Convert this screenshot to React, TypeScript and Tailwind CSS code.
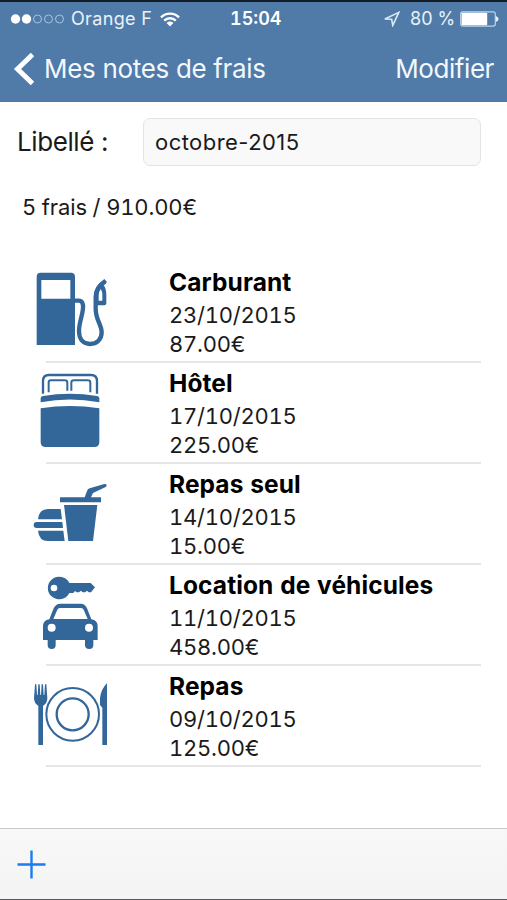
import type { ReactNode } from "react"

type Expense = {
  label: string
  date: string
  amount: string
  icon: ReactNode
}

function FuelIcon() {
  return (
    <svg viewBox="0 3 330 300" className="h-[100px] w-[110px]" fill="#336699">
      <path
        fillRule="evenodd"
        d="M50 255V50Q50 38 62 38H153Q165 38 165 50V255ZM64 60V116H151V60Z"
      />
      <path
        d="M164 122H176Q191 122 189 145C187 170 177 187 177 213C177 238 190 252 210 252C231 252 245 238 245 217C245 194 227 180 227 146V112C227 88 238 75 255 65"
        fill="none"
        stroke="#336699"
        strokeWidth="13"
      />
      <path
        fillRule="evenodd"
        d="M222 110Q224 84 237 72L253 57L261 66L251 76Q259 86 259 105V128Q259 136 251 136H228ZM236 122H247V104Q247 94 242 87Q236 94 236 106Z"
      />
    </svg>
  )
}

function BedIcon() {
  return (
    <svg viewBox="0 6 330 300" className="h-[100px] w-[110px]" fill="#336699">
      <path d="M69 101V63Q69 45 87 45H213Q231 45 231 63V101" fill="none" stroke="#336699" strokeWidth="7" />
      <path
        d="M86 97V67Q86 61 92 61H134Q142 61 142 68V92M154 92V68Q154 61 162 61H203Q211 61 211 68V97"
        fill="none"
        stroke="#336699"
        strokeWidth="6"
      />
      <path d="M62 127V114Q62 109 69 108Q150 95 231 108Q238 109 238 114V127Q150 110 62 127Z" />
      <path d="M62 145Q150 131 238 145V246Q238 261 223 261H77Q62 261 62 246Z" />
    </svg>
  )
}

function FastFoodIcon() {
  return (
    <svg viewBox="0 -6 330 300" className="h-[100px] w-[110px]" fill="#336699">
      <path d="M120 97H194L202 76Q204 72 209 70L253 57Q258 56 260 60Q260 64 257 66L219 84L213 97H243V112H120Z" />
      <path d="M132 120H232L219 228H145Z" />
      <path d="M54 163Q57 132 84 132H122L126 163Z" />
      <path d="M50 171H127L129 189H50Q41 189 41 180Q41 171 50 171Z" />
      <path d="M54 197H130L134 228H84Q57 228 54 197Z" />
    </svg>
  )
}

function CarRentalIcon() {
  return (
    <svg viewBox="0 -3 330 300" className="h-[100px] w-[110px]" fill="#336699">
      <path
        fillRule="evenodd"
        d="M148 54H212L225 67L213 82H206L201 77L195 82H188L183 77L177 82H170L165 78L160 84H148A34 34 0 1 1 148 54ZM102 59A10 10 0 1 0 102 79A10 10 0 1 0 102 59Z"
      />
      <path
        fillRule="evenodd"
        d="M88 163L101 130Q107 116 121 116H182Q196 116 201 130L214 163Q233 166 233 183V225H220V240Q220 252 208 252Q195 252 195 240V225H107V240Q107 252 95 252Q83 252 83 240V225H69V183Q69 166 88 163ZM100 162H203L191 134Q189 129 183 129H120Q114 129 112 134ZM95 176A12 12 0 1 0 95 200A12 12 0 1 0 95 176ZM207 176A12 12 0 1 0 207 200A12 12 0 1 0 207 176Z"
      />
    </svg>
  )
}

function MealIcon() {
  return (
    <svg viewBox="0 0 330 300" className="h-[100px] w-[110px]" fill="#336699">
      <path d="M45 58H49L51 90H53L55 58H59L61 90H63L65 58H69L71 90H73L75 58H79L82 100Q82 114 69 123V240H55V123Q42 114 42 100Z" />
      <circle cx="158" cy="148" r="79" fill="none" stroke="#336699" strokeWidth="6" />
      <circle cx="158" cy="148" r="48" fill="none" stroke="#336699" strokeWidth="7" />
      <path d="M261 55V240H247V128L240 120V100Q243 72 261 55Z" />
    </svg>
  )
}

const expenses: Expense[] = [
  { label: "Carburant", date: "23/10/2015", amount: "87.00€", icon: <FuelIcon /> },
  { label: "Hôtel", date: "17/10/2015", amount: "225.00€", icon: <BedIcon /> },
  { label: "Repas seul", date: "14/10/2015", amount: "15.00€", icon: <FastFoodIcon /> },
  { label: "Location de véhicules", date: "11/10/2015", amount: "458.00€", icon: <CarRentalIcon /> },
  { label: "Repas", date: "09/10/2015", amount: "125.00€", icon: <MealIcon /> },
]

function StatusBar() {
  return (
    <div className="flex h-[34px] items-center text-[18px] leading-[34px] text-[#e9f2fb]">
      <div className="flex w-[230px] items-center">
        <svg viewBox="0 0 56 12" className="ml-[10px] h-3 w-14 shrink-0">
          <circle cx="5.5" cy="6" r="4.7" fill="#fff" />
          <circle cx="16.5" cy="6" r="4.7" fill="#fff" />
          <circle cx="27.5" cy="6" r="4" fill="none" stroke="#a9c4df" />
          <circle cx="38.5" cy="6" r="4" fill="none" stroke="#a9c4df" />
          <circle cx="49.5" cy="6" r="4" fill="none" stroke="#a9c4df" />
        </svg>
        <span className="ml-[5px] w-[89px] whitespace-nowrap tracking-[0.35px]">Orange F</span>
        <svg viewBox="0 0 20 15" className="h-[15px] w-5" fill="none" stroke="#fff" strokeWidth="2.4">
          <path d="M1 5.3A12.8 12.8 0 0 1 19 5.3" />
          <path d="M4.2 8.6A8.2 8.2 0 0 1 15.8 8.6" />
          <path d="M10 14.5L6.6 11A4.8 4.8 0 0 1 13.4 11Z" fill="#fff" stroke="none" />
        </svg>
      </div>
      <span className="w-[153px] whitespace-nowrap font-semibold tabular-nums text-white">15:04</span>
      <svg viewBox="0 0 18 16" className="h-4 w-[18px]" fill="none" stroke="#dbe8f5" strokeWidth="1.6">
        <path d="M15.8 1.4L1.8 8L8.6 8.3L9.8 14.4Z" />
      </svg>
      <span className="ml-[9px] w-[50px] whitespace-nowrap">80 %</span>
      <svg viewBox="0 0 40 16" className="h-4 w-10">
        <rect x="0.7" y="0.9" width="34.6" height="14.2" rx="2" fill="none" stroke="#bdd3e8" strokeWidth="1.2" />
        <rect x="1.6" y="1.8" width="25.6" height="12.4" rx="0.8" fill="#fff" />
        <path d="M35.8 5Q38.6 6 38.6 8Q38.6 10 35.8 11Z" fill="#e9f2fb" />
      </svg>
    </div>
  )
}

function NavBar() {
  return (
    <div className="flex h-[66px] items-center text-[26px] leading-[66px] text-[#f3f8fd]">
      <svg viewBox="0 0 22 34" className="ml-[13px] h-[34px] w-[22px]" fill="none" stroke="#fff" strokeWidth="5">
        <path d="M19.5 2.5L4.5 17L19.5 31.5" />
      </svg>
      <span className="ml-[9px] flex-1 whitespace-nowrap tracking-[-0.32px]">Mes notes de frais</span>
      <span className="mr-[13px] whitespace-nowrap tracking-[-0.42px]">Modifier</span>
    </div>
  )
}

function ExpenseRow({ label, date, amount, icon }: Expense) {
  return (
    <li className="flex h-[101px] border-b-2 border-[#e6e6e6]">
      <div className="-ml-[26px] -mt-px w-[149px] shrink-0">{icon}</div>
      <div className="whitespace-nowrap pt-[3px] text-[22px] leading-7 tracking-[-0.25px] tabular-nums">
        <p className="mb-0.5 text-[24.5px] font-bold leading-[34px] tracking-[0.1px] text-black">{label}</p>
        <p className="mb-px">{date}</p>
        <p>{amount}</p>
      </div>
    </li>
  )
}

export default function App() {
  return (
    <main className="flex h-[900px] w-[507px] flex-col overflow-hidden border-b border-[#5a5a5c] bg-white font-['Inter','Liberation_Sans',sans-serif] text-[#1a1a1a]">
      <header className="h-[102px] border-t-2 border-[#131c27] bg-[#507ba8]">
        <StatusBar />
        <NavBar />
      </header>

      <section className="flex h-[80px] items-center pl-[17px]">
        <span className="w-[126px] whitespace-nowrap text-[26px] leading-8 tracking-[-0.4px]">Libellé :</span>
        <div className="flex h-12 w-[338px] items-center rounded-[7px] border border-[#e4e4e4] bg-[#f9f9f9] pl-[11px] text-[22px] tracking-[0.45px]">
          octobre-2015
        </div>
      </section>

      <p className="mt-2 h-[72px] pl-[22px] text-[22px] leading-[34px] tracking-[-0.15px] tabular-nums">
        5 frais / 910.00€
      </p>

      <ul className="ml-[46px] mr-[26px] flex-1">
        {expenses.map((expense) => (
          <ExpenseRow key={expense.date} {...expense} />
        ))}
      </ul>

      <footer className="flex h-[71px] items-center border-t border-[#c9c9c9] bg-linear-to-b from-[#f8f8f8] to-[#f4f4f4] pl-[17px]">
        <svg viewBox="0 0 29 29" className="h-[29px] w-[29px]" stroke="#1b7cf0" strokeWidth="2.4">
          <path d="M14.5 0.5V28.5M0.5 14.5H28.5" />
        </svg>
      </footer>
    </main>
  )
}
